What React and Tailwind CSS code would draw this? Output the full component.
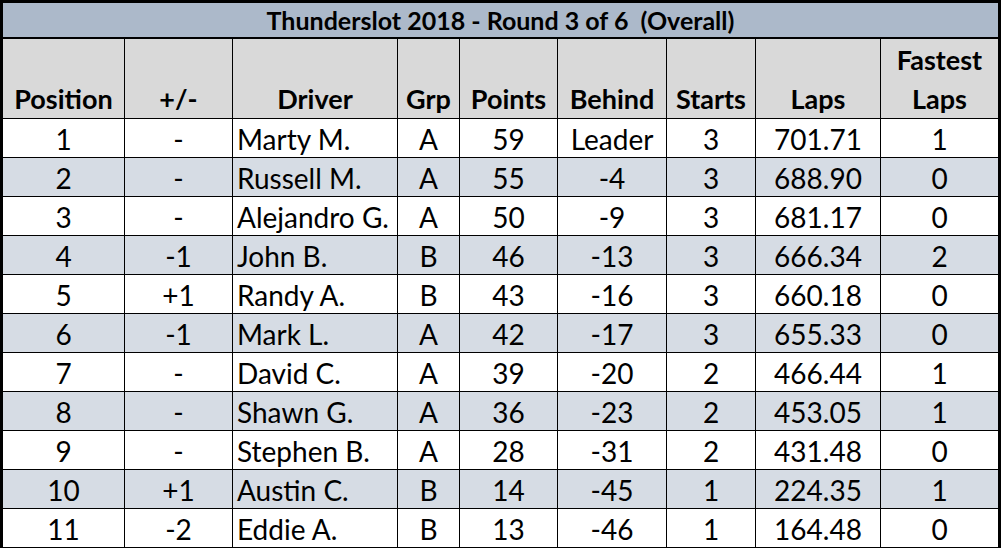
import React from "react";

const rows = [
  ["1", "-", "Marty M.", "A", "59", "Leader", "3", "701.71", "1"],
  ["2", "-", "Russell M.", "A", "55", "-4", "3", "688.90", "0"],
  ["3", "-", "Alejandro G.", "A", "50", "-9", "3", "681.17", "0"],
  ["4", "-1", "John B.", "B", "46", "-13", "3", "666.34", "2"],
  ["5", "+1", "Randy A.", "B", "43", "-16", "3", "660.18", "0"],
  ["6", "-1", "Mark L.", "A", "42", "-17", "3", "655.33", "0"],
  ["7", "-", "David C.", "A", "39", "-20", "2", "466.44", "1"],
  ["8", "-", "Shawn G.", "A", "36", "-23", "2", "453.05", "1"],
  ["9", "-", "Stephen B.", "A", "28", "-31", "2", "431.48", "0"],
  ["10", "+1", "Austin C.", "B", "14", "-45", "1", "224.35", "1"],
  ["11", "-2", "Eddie A.", "B", "13", "-46", "1", "164.48", "0"],
];

const headers = ["Position", "+/-", "Driver", "Grp", "Points", "Behind", "Starts", "Laps"];

export default function App() {
  return (
    <div className="w-[1004px] h-[550px] bg-white overflow-hidden" style={{ fontFamily: "Lato, 'Open Sans', sans-serif" }}>
      <div className="w-[1001px] bg-black pt-[3px] pl-[3px] pr-[3px] pb-px">
        <div className="h-[34px] bg-[#acb9ca] flex items-center justify-center text-[25px] font-bold text-black whitespace-pre leading-none">
          Thunderslot 2018 - Round 3 of 6  (Overall)
        </div>
        <div className="mt-[2px] grid grid-cols-[121px_107px_164px_61px_97px_108px_88px_124px_117px] gap-px">
          {headers.map((h) => (
            <div key={h} className="h-[79px] bg-[#d9d9d9] flex items-end justify-center text-[27px] font-bold leading-[39px] text-black">
              {h}
            </div>
          ))}
          <div className="h-[79px] bg-[#d9d9d9] flex flex-col items-center justify-end text-[27px] font-bold leading-[39px] text-black">
            <span>Fastest</span>
            <span>Laps</span>
          </div>
          {rows.map((r, i) =>
            r.map((c, j) => (
              <div
                key={i + "-" + j}
                className={
                  "h-[38px] flex items-center text-[28px] text-black leading-none pt-[2px] " +
                  (i % 2 === 1 ? "bg-[#d6dce4] " : "bg-white ") +
                  (j === 2 ? "justify-start pl-[4px]" : "justify-center")
                }
              >
                {c}
              </div>
            ))
          )}
        </div>
      </div>
    </div>
  );
}
